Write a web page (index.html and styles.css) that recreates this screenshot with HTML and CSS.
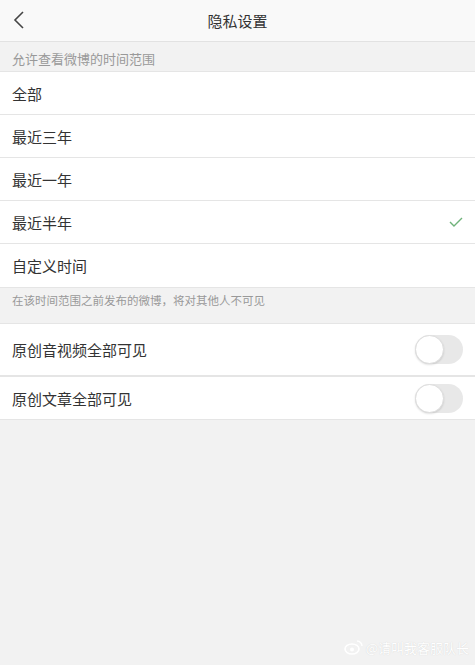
FILE: index.html
```html
<!DOCTYPE html>
<html lang="zh">
<head>
<meta charset="utf-8">
<title>隐私设置</title>
<link rel="stylesheet" href="styles.css">
</head>
<body>
<div class="page">
  <header class="topbar">
    <svg class="back" width="14" height="20" viewBox="0 0 14 20"><path d="M11 2 L3 10 L11 18" fill="none" stroke="#444" stroke-width="1.6"/></svg>
    <div class="title">隐私设置</div>
  </header>
  <div class="section-label">允许查看微博的时间范围</div>
  <ul class="list">
    <li class="row">全部</li>
    <li class="row">最近三年</li>
    <li class="row">最近一年</li>
    <li class="row">最近半年<svg class="check" width="14" height="10" viewBox="0 0 14 10"><path d="M1 5 L5 9 L13 1" fill="none" stroke="#6fb27a" stroke-width="1.4"/></svg></li>
    <li class="row">自定义时间</li>
  </ul>
  <div class="note">在该时间范围之前发布的微博，将对其他人不可见</div>
  <ul class="list toggles">
    <li class="row trow">原创音视频全部可见<span class="switch"><span class="knob"></span></span></li>
    <li class="row trow">原创文章全部可见<span class="switch"><span class="knob"></span></span></li>
  </ul>
  <div class="spacer"></div>
  <div class="watermark">
    <svg width="20" height="16" viewBox="0 0 20 16"><ellipse cx="8" cy="10" rx="7" ry="5" fill="none" stroke="#fff" stroke-width="1.6"/><circle cx="8" cy="10.5" r="2" fill="#fff"/><path d="M13 2 A5 5 0 0 1 18 7" fill="none" stroke="#fff" stroke-width="1.4"/></svg>
    <span>@请叫我客服队长</span>
  </div>
</div>
</body>
</html>
```
FILE: styles.css
```css
* { box-sizing: border-box; }
html, body { margin: 0; padding: 0; }
body {
  font-family: "Noto Sans CJK SC", "Noto Sans", sans-serif;
  background: #f2f2f2;
  color: #333;
}
.page {
  width: 475px;
  height: 665px;
  display: flex;
  flex-direction: column;
}
.topbar {
  height: 42px;
  background: #f9f9f9;
  border-bottom: 1px solid #e2e2e2;
  display: flex;
  align-items: center;
  justify-content: center;
  position: relative;
}
.back { position: absolute; left: 12px; top: 10px; }
.title { font-size: 15px; color: #333; }
.section-label {
  height: 30px;
  padding: 8px 12px 0;
  font-size: 13px;
  line-height: 18px;
  color: #999;
  border-bottom: 1px solid #e5e5e5;
}
.list { list-style: none; margin: 0; padding: 0; background: #fff; }
.row {
  height: 43px;
  padding: 0 12px;
  border-bottom: 1px solid #e5e5e5;
  display: flex;
  align-items: center;
  justify-content: space-between;
  font-size: 15px;
  color: #333;
}
.row:last-child { height: 44px; }
.note {
  height: 36px;
  padding: 3px 12px 0;
  font-size: 11.5px;
  line-height: 18px;
  color: #999;
  border-bottom: 1px solid #e5e5e5;
}
.toggles .trow { height: 52px; }
.toggles .trow + .trow { height: 44px; border-top: 1px solid #e5e5e5; }
.switch {
  width: 48px;
  height: 29px;
  border-radius: 15px;
  background: #e8e8e8;
  position: relative;
}
.knob {
  position: absolute;
  left: 0;
  top: 0;
  width: 29px;
  height: 29px;
  border-radius: 50%;
  background: #fff;
  border: 1px solid #ddd;
  box-shadow: 0 1px 2px rgba(0,0,0,0.12);
}
.spacer { flex: 1; }
.watermark {
  height: 30px;
  display: flex;
  align-items: center;
  justify-content: flex-end;
  gap: 2px;
  padding: 0 6px 6px 0;
  color: #fff;
  font-size: 13px;
  text-shadow: 0 0 1px #ccc;
}
```
